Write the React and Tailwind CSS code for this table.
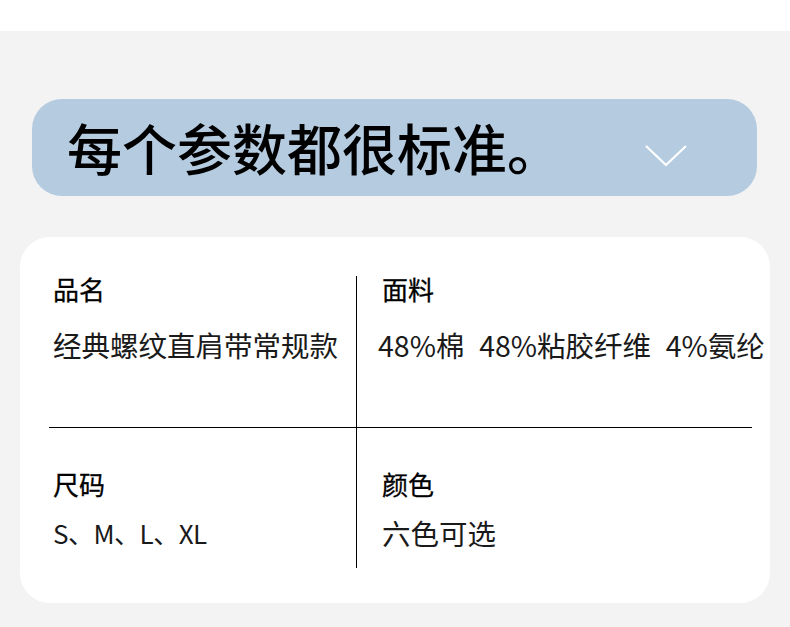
export default function App() {
  const font = { fontFamily: '"Noto Sans CJK SC", "Noto Sans", sans-serif' };
  const label = "text-[26px] leading-none font-normal text-black [-webkit-text-stroke:0.3px_black]";
  return (
    <div className="w-[790px] h-[627px] bg-white overflow-hidden" style={font}>
      <div className="mt-[31px] h-[596px] bg-[#f3f3f3] pt-[68px]">
        <div className="ml-[32px] w-[725px] h-[97px] rounded-[30px] bg-[#b5cbe0] flex items-center justify-between pl-[35px] pr-[70px]">
          <div className="text-[55px] leading-none font-medium text-black -mt-[2px] whitespace-nowrap">每个参数都很标准。</div>
          <svg width="42" height="22" viewBox="0 0 42 22" className="mt-[16px] shrink-0">
            <polyline points="1,1 21,20 41,1" fill="none" stroke="#ffffff" strokeWidth="2.2" />
          </svg>
        </div>
        <div className="mt-[41px] ml-[20px] w-[750px] h-[366px] rounded-[30px] bg-white pt-[39px] pl-[29px]">
          <div className="grid grid-cols-[308px_395px] grid-rows-[152px_140px]">
            <div className="border-r border-b border-black pl-[4px]">
              <div className={label}>品名</div>
              <div className="mt-[29px] text-[28.5px] leading-none text-[#1a1a1a] whitespace-nowrap">经典螺纹直肩带常规款</div>
            </div>
            <div className="border-b border-black pl-[25px]">
              <div className={label}>面料</div>
              <div className="mt-[29px] -ml-[4px] text-[28.5px] leading-none text-[#1a1a1a] whitespace-pre [word-spacing:1px]">48%棉  48%粘胶纤维  4%氨纶</div>
            </div>
            <div className="border-r border-black pl-[4px] pt-[43px]">
              <div className={label}>尺码</div>
              <div className="mt-[23px] text-[26px] leading-none tracking-[-0.5px] text-[#1a1a1a] whitespace-nowrap">S、M、L、XL</div>
            </div>
            <div className="pl-[25px] pt-[43px]">
              <div className={label}>颜色</div>
              <div className="mt-[22px] text-[28.5px] leading-none text-[#1a1a1a] whitespace-nowrap">六色可选</div>
            </div>
          </div>
        </div>
      </div>
    </div>
  );
}
